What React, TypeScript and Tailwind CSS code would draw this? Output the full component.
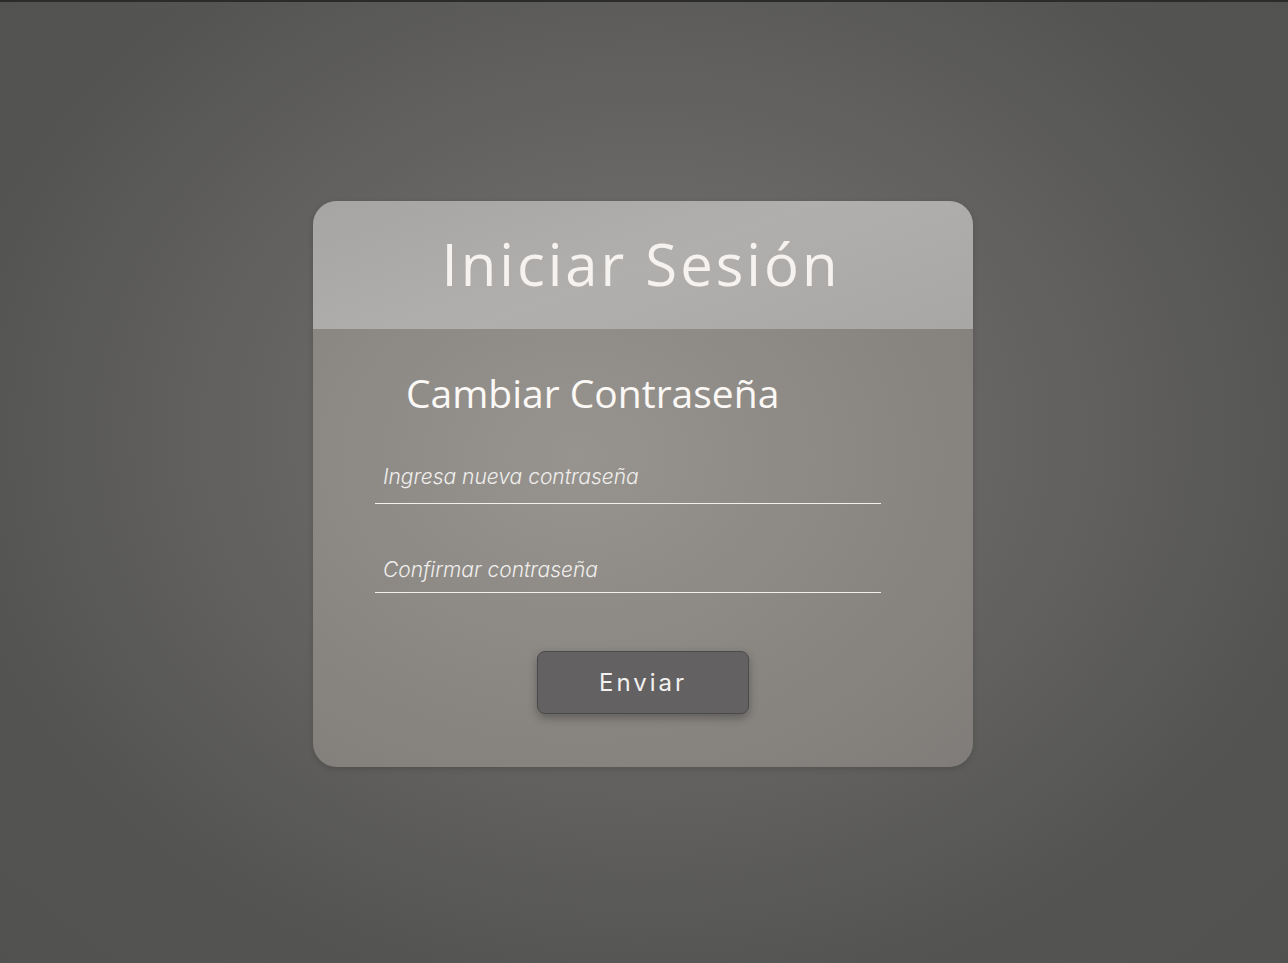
export default function App() {
  return (
    <div className="w-full h-[963px] border-t-2 border-[#2b2b2a] bg-[radial-gradient(ellipse_at_50%_45%,#757471_0%,#656462_40%,#545452_75%,#51514f_100%)] flex justify-center pt-[199px]">
      <div className="w-[660px] h-[566px] mr-[2px] rounded-[24px] overflow-hidden flex flex-col bg-[radial-gradient(ellipse_at_40%_45%,#97948f_0%,#8a8783_55%,#7f7c79_100%)] shadow-[0_2px_6px_rgba(0,0,0,0.15)]">
        <div className="h-[128px] flex items-center justify-center bg-[linear-gradient(160deg,#a6a5a3_0%,#b0afad_50%,#a8a7a5_100%)]">
          <h1 className="font-['Open_Sans',sans-serif] text-[58px] tracking-[3px] text-[#f6f2f0] -mt-[3px] pr-[4px]">
            Iniciar Sesión
          </h1>
        </div>
        <div className="flex flex-col px-[62px] pt-[40px]">
          <h2 className="font-['Open_Sans',sans-serif] text-[39px] leading-[48px] text-[#fbf8f6] pl-[31px]">
            Cambiar Contraseña
          </h2>
          <div className="w-[506px] mt-[37px] flex flex-col">
            <input
              type="password"
              placeholder="Ingresa nueva contraseña"
              className="h-[50px] bg-transparent border-b border-[#f2f0ee] outline-none px-[8px] pb-[4px] font-['Inter',sans-serif] italic font-light text-[21px] text-white placeholder:text-[#f0eeec]"
            />
            <input
              type="password"
              placeholder="Confirmar contraseña"
              className="h-[50px] mt-[39px] bg-transparent border-b border-[#f2f0ee] outline-none px-[8px] pt-[3px] font-['Inter',sans-serif] italic font-light text-[21px] text-white placeholder:text-[#f0eeec]"
            />
          </div>
          <div className="flex justify-center mt-[58px]">
            <button className="w-[212px] h-[63px] rounded-[8px] bg-[#636162] border border-[#4b4a4a] shadow-[0_4px_10px_rgba(0,0,0,0.3)] font-['Inter',sans-serif] text-[24px] tracking-[3px] text-[#f3f1f0]">
              Enviar
            </button>
          </div>
        </div>
      </div>
    </div>
  );
}
